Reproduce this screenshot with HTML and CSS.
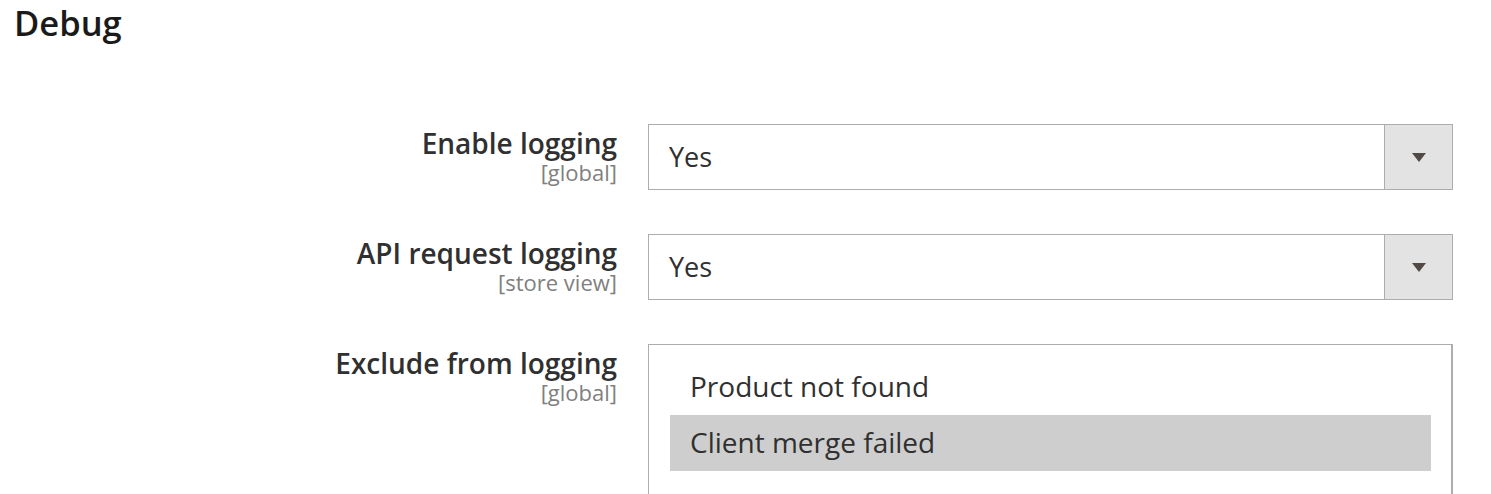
FILE: index.html
```html
<!DOCTYPE html>
<html>
<head>
<meta charset="utf-8">
<link rel="stylesheet" href="styles.css">
</head>
<body>
<div class="page">
  <h2 class="section-title">Debug</h2>
  <div class="form">
    <div class="row">
      <div class="label-col">
        <div class="label">Enable logging</div>
        <div class="scope">[global]</div>
      </div>
      <div class="control">
        <div class="select">
          <span class="value">Yes</span>
          <span class="arrow"><span class="tri"></span></span>
        </div>
      </div>
    </div>
    <div class="row">
      <div class="label-col">
        <div class="label">API request logging</div>
        <div class="scope">[store view]</div>
      </div>
      <div class="control">
        <div class="select">
          <span class="value">Yes</span>
          <span class="arrow"><span class="tri"></span></span>
        </div>
      </div>
    </div>
    <div class="row">
      <div class="label-col">
        <div class="label">Exclude from logging</div>
        <div class="scope">[global]</div>
      </div>
      <div class="control">
        <div class="multi">
          <div class="option">Product not found</div>
          <div class="option selected">Client merge failed</div>
        </div>
      </div>
    </div>
  </div>
</div>
</body>
</html>
```
FILE: styles.css
```css
html, body {
  margin: 0;
  padding: 0;
  background: #fff;
  overflow: hidden;
}
body {
  font-family: "Open Sans", "Noto Sans", sans-serif;
  color: #303030;
}
.page {
  padding: 0 0 0 14px;
  height: 494px;
  overflow: hidden;
}
.section-title {
  margin: 0;
  padding-top: 1px;
  font-size: 34.5px;
  font-weight: 600;
  color: #1a1a1a;
  line-height: 44px;
}
.form {
  padding-top: 79px;
}
.row {
  display: flex;
  margin-bottom: 44px;
}
.label-col {
  width: 603px;
  text-align: right;
}
.label {
  font-size: 28px;
  font-weight: 600;
  line-height: 34px;
  color: #303030;
  margin-top: 2px;
}
.scope {
  font-size: 22px;
  color: #808080;
  line-height: 22px;
  margin-top: 1px;
}
.control {
  margin-left: 31px;
  width: 805px;
}
.select {
  box-sizing: border-box;
  height: 66px;
  border: 1px solid #adadad;
  display: flex;
  align-items: stretch;
}
.value {
  flex: 1;
  display: flex;
  align-items: center;
  padding-left: 20px;
  padding-bottom: 2px;
  font-size: 27px;
  color: #303030;
}
.arrow {
  width: 67px;
  background: #e3e3e3;
  border-left: 1px solid #adadad;
  display: flex;
  align-items: center;
  justify-content: center;
}
.tri {
  width: 0;
  height: 0;
  border-left: 7px solid transparent;
  border-right: 7px solid transparent;
  border-top: 9px solid #514943;
}
.multi {
  box-sizing: border-box;
  border: 1px solid #adadad;
  border-right-width: 2px;
  height: 200px;
  padding: 14px 20px 0 21px;
}
.option {
  height: 56px;
  line-height: 54px;
  font-size: 28px;
  padding-left: 20px;
  color: #303030;
}
.option.selected {
  background: #cecece;
}
```
